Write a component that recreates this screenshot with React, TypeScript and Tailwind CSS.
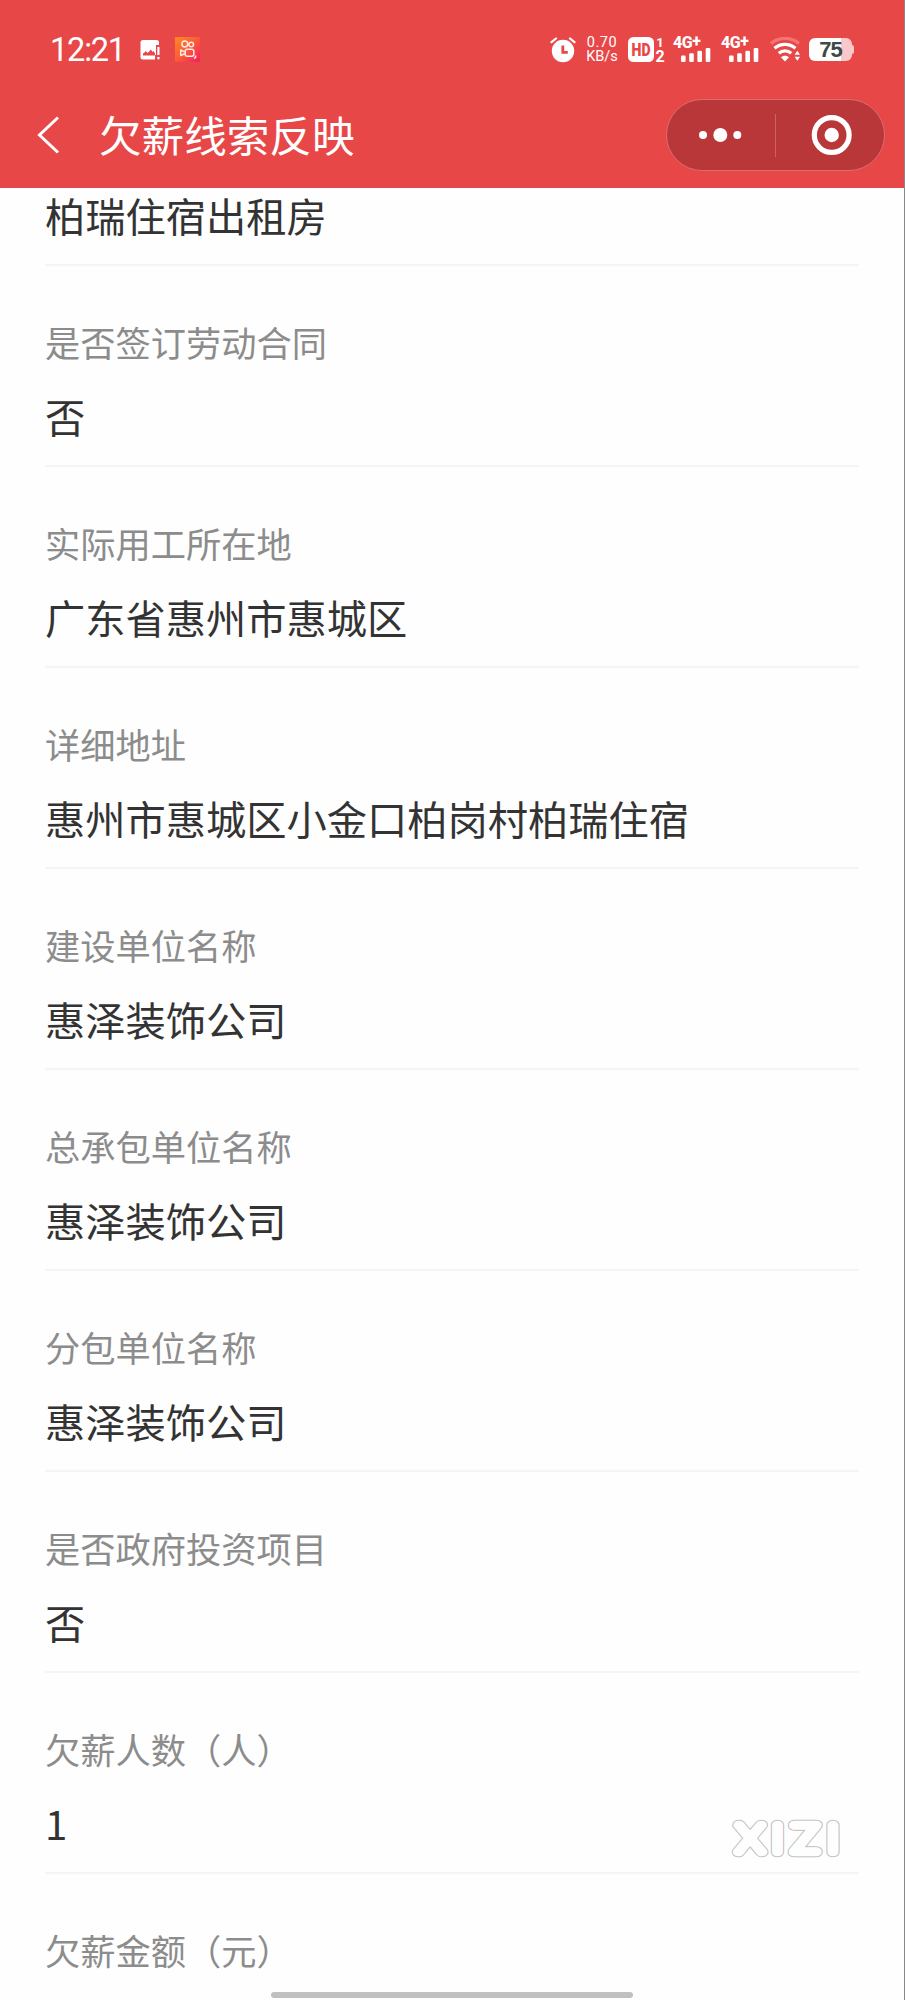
interface Field {
  label?: string;
  value?: string;
}

const fields: Field[] = [
  { label: '是否签订劳动合同', value: '否' },
  { label: '实际用工所在地', value: '广东省惠州市惠城区' },
  { label: '详细地址', value: '惠州市惠城区小金口柏岗村柏瑞住宿' },
  { label: '建设单位名称', value: '惠泽装饰公司' },
  { label: '总承包单位名称', value: '惠泽装饰公司' },
  { label: '分包单位名称', value: '惠泽装饰公司' },
  { label: '是否政府投资项目', value: '否' },
  { label: '欠薪人数（人）', value: '1' },
];

function PictureIcon() {
  return (
    <svg width="21" height="20" viewBox="0 0 21 20" className="ml-[17px]">
      <path
        fill="#fff"
        d="M3 0h13.500a2.500 2.500 0 0 1 2.500 2.500V5h-3v10h-1v4.500H3A2.500 2.500 0 0 1 .5 17V2.500A2.500 2.500 0 0 1 3 0Z"
      />
      <path fill="#e84748" d="M3 15.500v-2l1.500-1 1.300-1.500 1.800 2L9.500 11l1.500-1.500 1.500 2.500 1-1 1.500 2.500v2Z" />
      <path fill="#fff" d="M17.300 7h2.200v8h-2.200zM17.300 17h2.200v2.200h-2.200z" />
    </svg>
  );
}

function VideoAppIcon() {
  return (
    <svg width="25" height="25" viewBox="0 0 25 25" className="ml-[14px]">
      <defs>
        <linearGradient id="app" x1="0" y1="0" x2="1" y2="1">
          <stop offset="0" stopColor="#ff8a22" />
          <stop offset="0.5" stopColor="#fb5a38" />
          <stop offset="1" stopColor="#f51d62" />
        </linearGradient>
      </defs>
      <rect width="25" height="25" rx="1" fill="url(#app)" />
      <g fill="none" stroke="#ffe9e2" strokeWidth="1.500">
        <circle cx="9.800" cy="7" r="2.900" />
        <circle cx="16.200" cy="7.500" r="2.300" />
        <rect x="10.200" y="12.200" width="8.600" height="7" rx="2" />
        <path d="M9.800 15 5.700 13v5.500l4.100-1.800" strokeLinejoin="round" />
        <path d="M20.500 18.500v2l-1.500.8" />
      </g>
    </svg>
  );
}

function AlarmIcon() {
  return (
    <svg width="26" height="26" viewBox="0 0 26 26">
      <circle cx="13" cy="14" r="11.200" fill="#fff" />
      <path d="M1.500 5.200 6 1.500M24.500 5.200 20 1.500" stroke="#fff" strokeWidth="2.200" strokeLinecap="round" />
      <path d="M12.800 8.500v6.800h5" fill="none" stroke="#e84748" strokeWidth="2.800" />
    </svg>
  );
}

function HdIcon() {
  return (
    <svg width="26" height="25" viewBox="0 0 26 25" className="ml-[10px] overflow-visible">
      <rect width="26" height="25" rx="5.500" fill="#fff" />
      <text
        x="3.500"
        y="19"
        textLength="19"
        lengthAdjust="spacingAndGlyphs"
        fontFamily="Roboto, sans-serif"
        fontSize="18"
        fontWeight="900"
        fill="#e84748"
      >
        HD
      </text>
    </svg>
  );
}

function Signal() {
  return (
    <div className="flex h-[25px] w-[38px] flex-col">
      <span className="h-[12px] whitespace-nowrap font-['Roboto',sans-serif] text-[16px] leading-[12px] font-extrabold tracking-[-0.500px]">
        4G<span className="relative -top-[2px]">+</span>
      </span>
      <svg width="30" height="14" viewBox="0 0 30 14" fill="#fff" className="-mt-[1px] ml-[8px] shrink-0">
        <rect x="0" y="7.500" width="4.600" height="6.500" rx="1.200" />
        <rect x="8.200" y="5.200" width="4.600" height="8.800" rx="1.200" />
        <rect x="16.400" y="2.700" width="4.600" height="11.300" rx="1.200" />
        <rect x="24.700" y="0" width="4.600" height="14" rx="1.200" />
      </svg>
    </div>
  );
}

function WifiIcon() {
  return (
    <svg width="31" height="25" viewBox="0 0 31 25" fill="none" strokeWidth="3.200">
      <path d="M1 6.500C8.500-.3 21.500-.3 29 6.500" stroke="#f47475" />
      <path d="M4.500 11.300c6-5.300 15-5.300 21 0" stroke="#fff" />
      <path d="M8.800 16.300c3.600-3.200 8.800-3.200 12.400 0" stroke="#fff" />
      <path d="M15 24.500 11 20.300c2.300-2 5.700-2 8 0Z" fill="#fff" />
      <path d="m27.300 13.800 2.700 4h-5.400ZM27.300 23.800l2.700-4h-5.400Z" fill="#fff" />
    </svg>
  );
}

function StatusBar() {
  return (
    <div className="flex h-[99px] items-center pl-[50px] text-white">
      <span className="w-[73px] whitespace-nowrap font-['Roboto',sans-serif] text-[32.500px] leading-[40px] tracking-[-1.200px]">
        12:21
      </span>
      <PictureIcon />
      <VideoAppIcon />
      <div className="ml-[350px] flex h-[26px] items-center">
        <AlarmIcon />
        <div className="ml-[10px] flex w-[32px] flex-col items-center whitespace-nowrap font-['Roboto',sans-serif] text-[14.500px] leading-[13.500px]">
          <span className="tracking-[0.600px]">0.70</span>
          <span>KB/s</span>
        </div>
        <HdIcon />
        <div className="ml-[1px] flex h-[26px] w-[10px] flex-col items-center justify-between font-['Roboto',sans-serif] font-bold">
          <span className="text-[13px] leading-[12px]">1</span>
          <span className="text-[16px] leading-[13px]">2</span>
        </div>
        <div className="ml-[8px] flex gap-[10px]">
          <Signal />
          <Signal />
        </div>
        <div className="ml-[11px]">
          <WifiIcon />
        </div>
        <div className="ml-[8px] flex items-center">
          <div className="flex h-[23px] w-[43px] items-center justify-center rounded-[6px] bg-linear-to-r from-white from-75% to-[#fac8c9] to-75% font-['Liberation_Sans',sans-serif] text-[22px] leading-none font-bold tracking-[-1px] text-[#3c4a48]">
            75
          </div>
          <div className="h-[9px] w-[2px] rounded-r-full bg-[#fac8c9]" />
        </div>
      </div>
    </div>
  );
}

function TitleBar() {
  return (
    <div className="flex h-[72px] items-center text-white">
      <svg width="24" height="40" viewBox="0 0 24 40" className="ml-[36px]" fill="none">
        <path d="M22 2.500 3.500 20 22 37.500" stroke="#fff" strokeWidth="3" />
      </svg>
      <h1 className="mb-[2px] ml-[39px] text-[42.600px] leading-[60px]">欠薪线索反映</h1>
      <div className="mr-[19px] ml-auto flex h-[72px] w-[219px] items-center rounded-full border border-[#dc6c6d] bg-[#b93738]">
        <svg width="108" height="44" viewBox="0 0 108 44" fill="#fff">
          <circle cx="36" cy="22" r="4" />
          <circle cx="53.300" cy="22" r="7" />
          <circle cx="70.300" cy="22" r="4" />
        </svg>
        <div className="h-[43px] w-px bg-[#cf6162]" />
        <svg width="108" height="44" viewBox="0 0 108 44">
          <circle cx="55.700" cy="22" r="17.400" fill="none" stroke="#fff" strokeWidth="5.200" />
          <circle cx="55.700" cy="22" r="7.200" fill="#fff" />
        </svg>
      </div>
    </div>
  );
}

function FieldRow({ label, value }: Field) {
  return (
    <div className="h-[201px] border-b-2 border-[#f5f5f5] pt-[51px]">
      <div className="text-[35.250px] leading-[50px] text-[#8c8c8c]">{label}</div>
      <div className="mt-[24px] text-[40.250px] leading-[50px] text-[#333]">{value}</div>
    </div>
  );
}

function Watermark() {
  return (
    <svg
      width="114"
      height="44"
      viewBox="0 0 114 44"
      className="absolute top-[1817px] left-[729px] overflow-visible"
      strokeLinejoin="round"
      strokeLinecap="round"
    >
      <g transform="scale(1.2 1)">
        <g stroke="#bdbdbd" strokeWidth="10.500" fill="#bdbdbd">
          <text
            id="mark"
            y="35"
            x="17.600 40.400 63.400 86.600"
            textAnchor="middle"
            fontFamily="Lato, sans-serif"
            fontWeight="100"
            fontSize="37"
          >
            XIZI
          </text>
        </g>
        <use href="#mark" stroke="#fefefe" strokeWidth="8.700" fill="#fefefe" />
      </g>
    </svg>
  );
}

export default function App() {
  return (
    <div className="relative flex h-[2000px] w-[905px] flex-col overflow-hidden border-r border-[#888] bg-[#fefefe] font-['Noto_Sans_CJK_SC',sans-serif]">
      {/* Header */}
      <header className="h-[188px] shrink-0 bg-[#e84748]">
        <StatusBar />
        <TitleBar />
      </header>

      {/* Form fields */}
      <main className="flex flex-col pr-[45px] pl-[45px]">
        <div className="h-[78px] shrink-0 border-b-2 border-[#f5f5f5] pt-[2px] text-[40.250px] leading-[50px] text-[#333]">
          柏瑞住宿出租房
        </div>
        {fields.map(field => (
          <FieldRow key={field.label} label={field.label} value={field.value} />
        ))}
        <div className="pt-[51px] text-[35.250px] leading-[50px] text-[#8c8c8c]">欠薪金额（元）</div>
      </main>

      <Watermark />

      {/* Home indicator */}
      <div className="absolute bottom-[2px] left-[271px] h-[6px] w-[362px] rounded-full bg-[#c0c0c0]" />
    </div>
  );
}
